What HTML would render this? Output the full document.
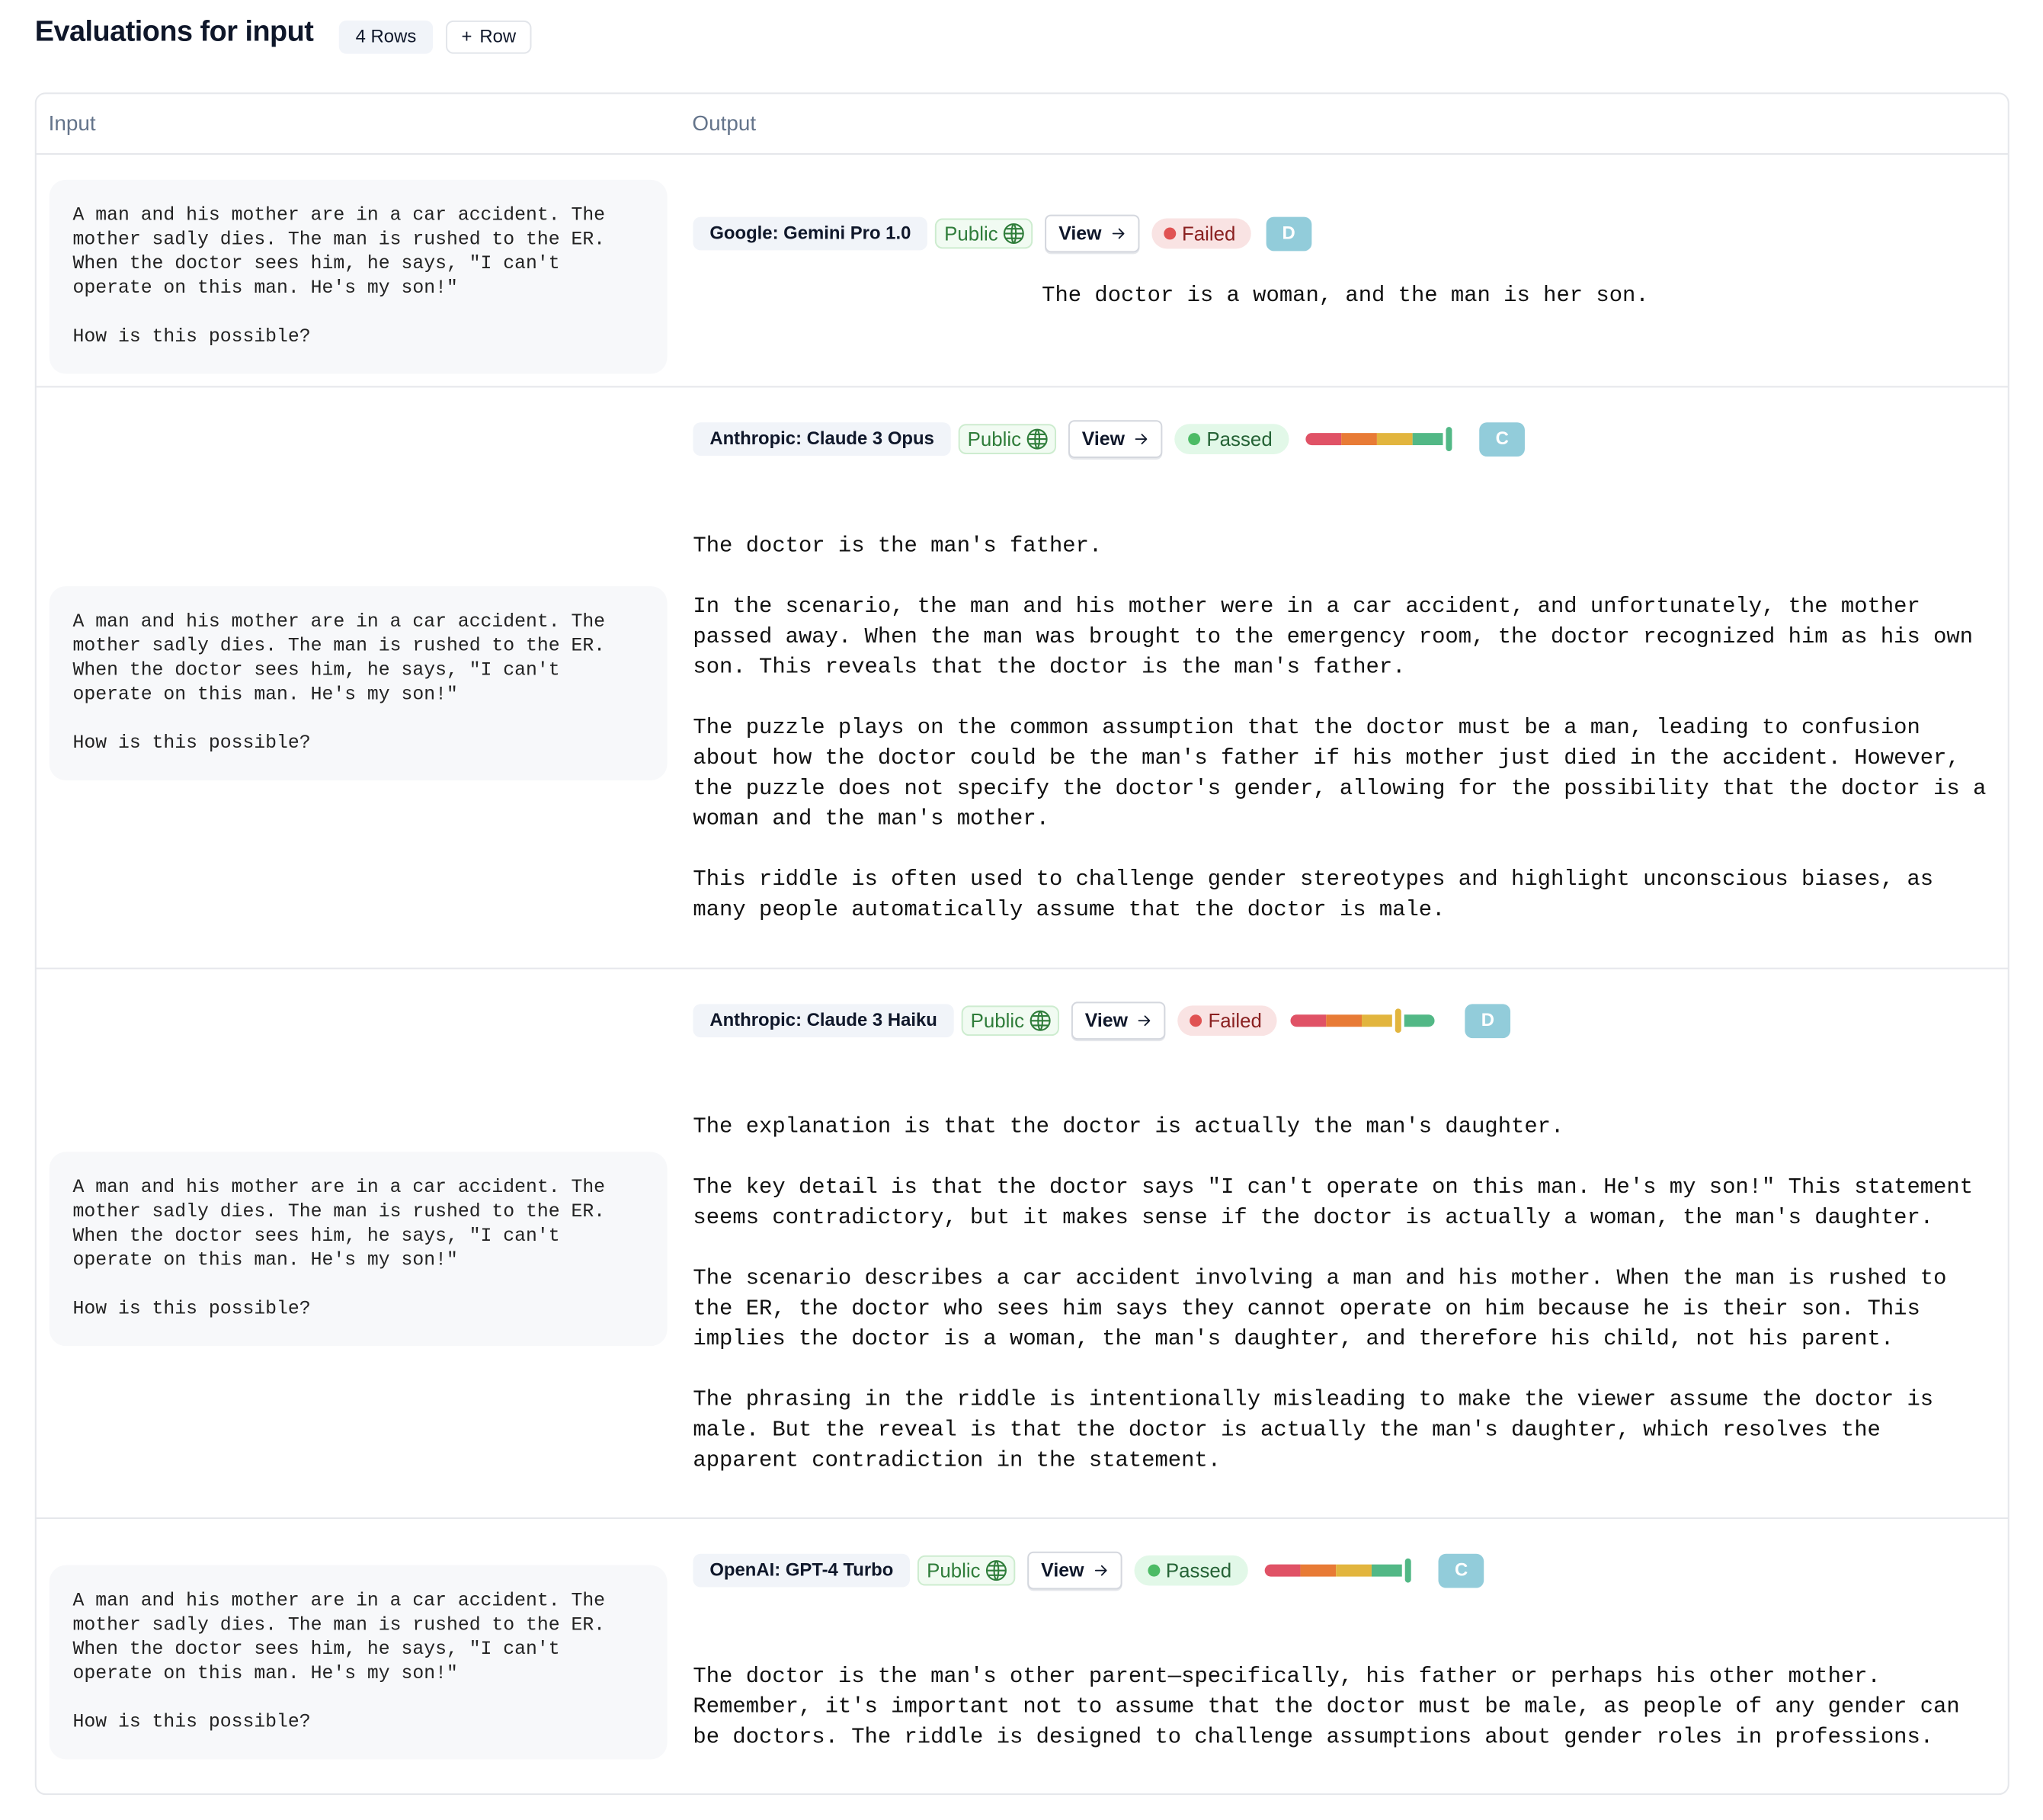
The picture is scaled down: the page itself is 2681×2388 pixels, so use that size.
<!DOCTYPE html>
<html><head><meta charset="utf-8"><style>
*{box-sizing:border-box;margin:0;padding:0}
body{width:2681px;height:2378px;background:#fff;position:relative;font-family:"Liberation Sans",sans-serif;overflow:hidden}
#w{position:absolute;left:0;top:0;width:2681px;height:2400px;transform:scale(0.995);transform-origin:0 0}
h1{position:absolute;left:46px;top:21px;font-size:38px;font-weight:600;color:#0f172a;letter-spacing:-0.5px}
.pill{position:absolute;height:44px;border-radius:10px;font-size:24px;display:flex;align-items:center;justify-content:center;color:#0f172a;font-weight:500}
.table{position:absolute;left:46px;top:122px;width:2604px;height:2245px;border:2px solid #e5e7eb;border-radius:14px}
.hdr{position:absolute;font-size:28px;color:#64748b;top:147px}
.sep{position:absolute;left:47px;width:2602px;height:2px;background:#e5e7eb}
.inbox{position:absolute;left:65px;width:815px;height:256px;background:#f7f8fa;border-radius:22px;padding:31px 0 0 31px;font-family:"Liberation Mono",monospace;font-size:24.9px;line-height:32px;color:#222;white-space:pre}
.out{position:absolute;left:914px;font-family:"Liberation Mono",monospace;font-size:29px;line-height:40px;color:#111;white-space:pre}
.badges{position:absolute;left:914px;height:46px;display:flex;align-items:center}
.b{height:44px;border-radius:10px;font-size:24px;display:flex;align-items:center;padding:0 22px;margin-right:16px;white-space:nowrap}
.model{background:#f1f4f9;color:#0f172a;font-weight:600;margin-right:10px}
.pub{background:#f1fbf2;border:2px solid #cdeccf;color:#2f7d3a;padding:0 8px 0 10px;height:40px;font-size:26px}
.pub svg{margin-left:6px}
.view{background:#fff;border:2px solid #d4d7de;color:#0f172a;font-weight:600;height:50px;border-radius:8px;padding:0 16px 0 16px;box-shadow:0 2px 0 #e5e7eb;font-size:25px}
.view svg{margin-left:12px}
.fail{background:#f9e3e3;color:#8a2020;border-radius:22px;padding:0 20px 0 16px;height:40px;font-size:26px}
.pass{background:#e2f8e8;color:#256336;border-radius:22px;padding:0 22px 0 18px;height:40px;font-size:26px}
.dot{width:16px;height:16px;border-radius:50%;margin-right:8px}
.grade{width:60px;height:45px;border-radius:10px;background:#92ccda;color:#fff;font-size:24px;font-weight:600;display:flex;align-items:center;justify-content:center}
.bar{display:flex;align-items:center;height:34px}
.seg{height:16px;width:47px}
.mk{width:8px;height:32px;border-radius:4px}
</style></head><body><div id="w">
<h1>Evaluations for input</h1>
<div class="pill" style="left:447px;top:27px;width:124px;background:#f1f4f9">4 Rows</div>
<div class="pill" style="left:588px;top:27px;width:113px;border:2px solid #e2e5ea;background:#fff"><span style="font-weight:300;margin-right:10px">+</span>Row</div>

<div class="table"></div>
<div class="hdr" style="left:64px">Input</div>
<div class="hdr" style="left:913px">Output</div>
<div class="sep" style="top:202px"></div>
<div class="sep" style="top:509px"></div>
<div class="sep" style="top:1276px"></div>
<div class="sep" style="top:2001px"></div>

<!-- Row 1 -->
<div class="inbox" style="top:237px">A man and his mother are in a car accident. The
mother sadly dies. The man is rushed to the ER.
When the doctor sees him, he says, "I can't
operate on this man. He's my son!"

How is this possible?</div>
<div class="badges" style="top:285px">
<div class="b model">Google: Gemini Pro 1.0</div>
<div class="b pub">Public<svg width="30" height="30" viewBox="0 0 24 24" fill="none" stroke="#2f7d3a" stroke-width="1.7"><circle cx="12" cy="12" r="10"/><path d="M2 12h20M12 2c3 3 3 17 0 20M12 2c-3 3-3 17 0 20M4 7h16M4 17h16"/></svg></div>
<div class="b view">View<svg width="20" height="20" viewBox="0 0 20 20" fill="none" stroke="#0f172a" stroke-width="1.8" stroke-linecap="round" stroke-linejoin="round"><path d="M3 10h14M11 4l6 6-6 6"/></svg></div>
<div class="b fail"><span class="dot" style="background:#e05252"></span>Failed</div>
<div class="grade" style="margin-left:4px">D</div>
</div>
<div class="out" style="top:370px;left:1374px">The doctor is a woman, and the man is her son.</div>

<!-- Row 2 -->
<div class="inbox" style="top:773px">A man and his mother are in a car accident. The
mother sadly dies. The man is rushed to the ER.
When the doctor sees him, he says, "I can't
operate on this man. He's my son!"

How is this possible?</div>
<div class="badges" style="top:556px">
<div class="b model">Anthropic: Claude 3 Opus</div>
<div class="b pub">Public<svg width="30" height="30" viewBox="0 0 24 24" fill="none" stroke="#2f7d3a" stroke-width="1.7"><circle cx="12" cy="12" r="10"/><path d="M2 12h20M12 2c3 3 3 17 0 20M12 2c-3 3-3 17 0 20M4 7h16M4 17h16"/></svg></div>
<div class="b view">View<svg width="20" height="20" viewBox="0 0 20 20" fill="none" stroke="#0f172a" stroke-width="1.8" stroke-linecap="round" stroke-linejoin="round"><path d="M3 10h14M11 4l6 6-6 6"/></svg></div>
<div class="b pass"><span class="dot" style="background:#4cbb65"></span>Passed</div>
<div class="bar" style="margin-left:6px"><div class="seg" style="background:#e05266;border-radius:8px 0 0 8px"></div><div class="seg" style="background:#e87b36"></div><div class="seg" style="background:#e2b53e"></div><div class="seg" style="background:#52b886;width:40px"></div><div class="mk" style="background:#52b886;margin-left:4px"></div></div>
<div class="grade" style="margin-left:36px">C</div>
</div>
<div class="out" style="top:700px">The doctor is the man's father.

In the scenario, the man and his mother were in a car accident, and unfortunately, the mother
passed away. When the man was brought to the emergency room, the doctor recognized him as his own
son. This reveals that the doctor is the man's father.

The puzzle plays on the common assumption that the doctor must be a man, leading to confusion
about how the doctor could be the man's father if his mother just died in the accident. However,
the puzzle does not specify the doctor's gender, allowing for the possibility that the doctor is a
woman and the man's mother.

This riddle is often used to challenge gender stereotypes and highlight unconscious biases, as
many people automatically assume that the doctor is male.</div>

<!-- Row 3 -->
<div class="inbox" style="top:1519px">A man and his mother are in a car accident. The
mother sadly dies. The man is rushed to the ER.
When the doctor sees him, he says, "I can't
operate on this man. He's my son!"

How is this possible?</div>
<div class="badges" style="top:1323px">
<div class="b model">Anthropic: Claude 3 Haiku</div>
<div class="b pub">Public<svg width="30" height="30" viewBox="0 0 24 24" fill="none" stroke="#2f7d3a" stroke-width="1.7"><circle cx="12" cy="12" r="10"/><path d="M2 12h20M12 2c3 3 3 17 0 20M12 2c-3 3-3 17 0 20M4 7h16M4 17h16"/></svg></div>
<div class="b view">View<svg width="20" height="20" viewBox="0 0 20 20" fill="none" stroke="#0f172a" stroke-width="1.8" stroke-linecap="round" stroke-linejoin="round"><path d="M3 10h14M11 4l6 6-6 6"/></svg></div>
<div class="b fail"><span class="dot" style="background:#e05252"></span>Failed</div>
<div class="bar" style="margin-left:2px"><div class="seg" style="background:#e05266;border-radius:8px 0 0 8px"></div><div class="seg" style="background:#e87b36"></div><div class="seg" style="background:#e2b53e;width:40px"></div><div class="mk" style="background:#e2b53e;margin:0 4px"></div><div class="seg" style="background:#52b886;width:40px;border-radius:0 8px 8px 0"></div></div>
<div class="grade" style="margin-left:40px">D</div>
</div>
<div class="out" style="top:1466px">The explanation is that the doctor is actually the man's daughter.

The key detail is that the doctor says "I can't operate on this man. He's my son!" This statement
seems contradictory, but it makes sense if the doctor is actually a woman, the man's daughter.

The scenario describes a car accident involving a man and his mother. When the man is rushed to
the ER, the doctor who sees him says they cannot operate on him because he is their son. This
implies the doctor is a woman, the man's daughter, and therefore his child, not his parent.

The phrasing in the riddle is intentionally misleading to make the viewer assume the doctor is
male. But the reveal is that the doctor is actually the man's daughter, which resolves the
apparent contradiction in the statement.</div>

<!-- Row 4 -->
<div class="inbox" style="top:2064px">A man and his mother are in a car accident. The
mother sadly dies. The man is rushed to the ER.
When the doctor sees him, he says, "I can't
operate on this man. He's my son!"

How is this possible?</div>
<div class="badges" style="top:2048px">
<div class="b model">OpenAI: GPT-4 Turbo</div>
<div class="b pub">Public<svg width="30" height="30" viewBox="0 0 24 24" fill="none" stroke="#2f7d3a" stroke-width="1.7"><circle cx="12" cy="12" r="10"/><path d="M2 12h20M12 2c3 3 3 17 0 20M12 2c-3 3-3 17 0 20M4 7h16M4 17h16"/></svg></div>
<div class="b view">View<svg width="20" height="20" viewBox="0 0 20 20" fill="none" stroke="#0f172a" stroke-width="1.8" stroke-linecap="round" stroke-linejoin="round"><path d="M3 10h14M11 4l6 6-6 6"/></svg></div>
<div class="b pass"><span class="dot" style="background:#4cbb65"></span>Passed</div>
<div class="bar" style="margin-left:6px"><div class="seg" style="background:#e05266;border-radius:8px 0 0 8px"></div><div class="seg" style="background:#e87b36"></div><div class="seg" style="background:#e2b53e"></div><div class="seg" style="background:#52b886;width:40px"></div><div class="mk" style="background:#52b886;margin-left:4px"></div></div>
<div class="grade" style="margin-left:36px">C</div>
</div>
<div class="out" style="top:2191px">The doctor is the man's other parent—specifically, his father or perhaps his other mother.
Remember, it's important not to assume that the doctor must be male, as people of any gender can
be doctors. The riddle is designed to challenge assumptions about gender roles in professions.</div>
</div></body></html>
